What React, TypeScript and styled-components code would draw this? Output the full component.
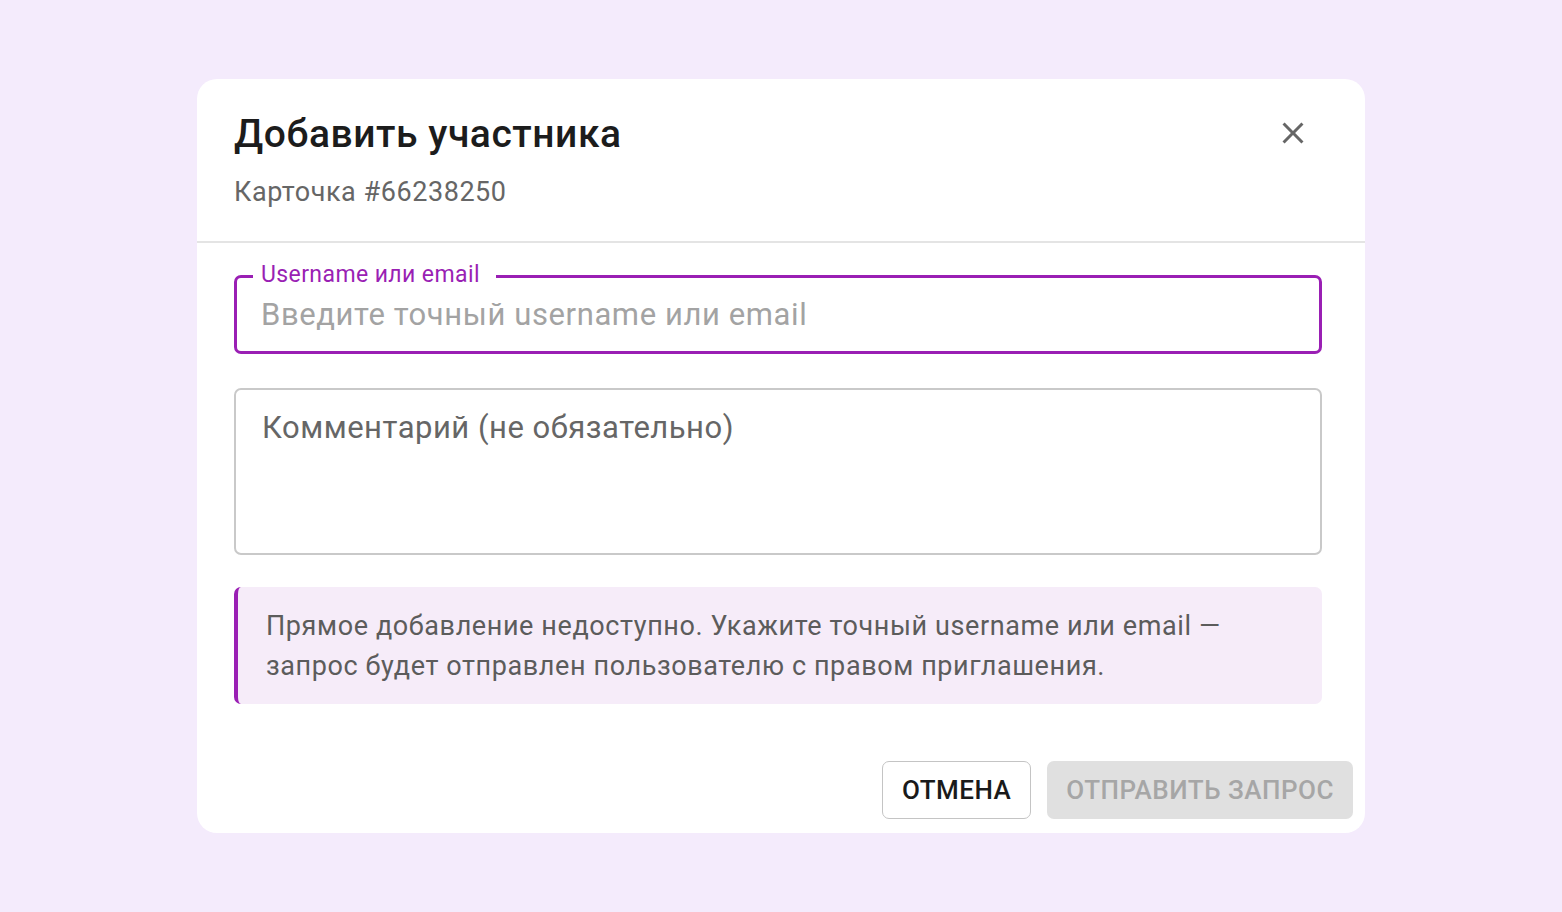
import styled, { createGlobalStyle } from 'styled-components';

const Global = createGlobalStyle`
    html, body {
        margin: 0;
        padding: 0;
        background: #f4ebfc;
        font-family: Roboto, "Noto Sans", "Liberation Sans", sans-serif;
    }
`

function CloseIcon() {
    return (
        <svg width="36" height="36" viewBox="0 0 24 24" fill="#666">
            <path d="M19 6.41 17.59 5 12 10.59 6.41 5 5 6.41 10.59 12 5 17.59 6.41 19 12 13.41 17.59 19 19 17.59 13.41 12z" />
        </svg>
    )
}

function App() {
    return (
        <Page>
            <Global />
            <Dialog>
                <Head>
                    <div>
                        <Title>Добавить участника</Title>
                        <Sub>Карточка #66238250</Sub>
                    </div>
                    <CloseBtn aria-label="close"><CloseIcon /></CloseBtn>
                </Head>
                <Body>
                    <Field $focused>
                        <Legend>Username или email</Legend>
                        <Input placeholder="Введите точный username или email" />
                    </Field>
                    <Field>
                        <Area placeholder="Комментарий (не обязательно)" />
                    </Field>
                    <Note>
                        Прямое добавление недоступно. Укажите точный username или email —
                        запрос будет отправлен пользователю с правом приглашения.
                    </Note>
                </Body>
                <Actions>
                    <Button $variant="outline">Отмена</Button>
                    <Button $variant="disabled" disabled>Отправить запрос</Button>
                </Actions>
            </Dialog>
        </Page>
    );
}

export default App;

const Page = styled.div`
    width: 1562px;
    height: 912px;
    display: flex;
    justify-content: center;
    padding-top: 79px;
    box-sizing: border-box;
`

const Dialog = styled.div`
    width: 1168px;
    height: 754px;
    background: #fff;
    border-radius: 20px;
    display: flex;
    flex-direction: column;
    box-sizing: border-box;
`

const Head = styled.div`
    display: flex;
    justify-content: space-between;
    align-items: flex-start;
    padding: 31px 54px 0 37px;
    height: 164px;
    box-sizing: border-box;
    border-bottom: 2px solid #e4e4e4;
`

const Title = styled.h2`
    margin: 0;
    font-size: 39px;
    line-height: 48px;
    font-weight: 500;
    letter-spacing: 0.55px;
    color: #1c1c1c;
`

const Sub = styled.div`
    margin-top: 18px;
    font-size: 27px;
    line-height: 32px;
    letter-spacing: 0.55px;
    color: #666;
`

const CloseBtn = styled.button`
    border: none;
    background: none;
    padding: 0;
    margin-top: 5px;
    width: 36px;
    height: 36px;
    cursor: pointer;
    display: flex;
`

const Body = styled.div`
    padding: 32px 43px 0 37px;
    display: flex;
    flex-direction: column;
    gap: 34px;
`

const Field = styled.div<{ $focused?: boolean }>`
    position: relative;
    border: ${p => p.$focused ? '3px solid #9a1fb4' : '2px solid #c9c9c9'};
    border-radius: 7px;
    display: flex;
`

const Legend = styled.span`
    position: absolute;
    top: -17px;
    left: 16px;
    padding: 0 16px 0 8px;
    background: #fff;
    font-size: 23px;
    line-height: 28px;
    letter-spacing: 0.4px;
    color: #9a1fb4;
`

const Input = styled.input`
    flex: 1;
    border: none;
    outline: none;
    background: transparent;
    font-family: inherit;
    font-size: 31px;
    letter-spacing: 0.6px;
    padding: 18px 24px 18px;
    color: #222;
    &::placeholder {
        color: #a3a3a3;
    }
`

const Area = styled.textarea`
    flex: 1;
    height: 163px;
    resize: none;
    border: none;
    outline: none;
    background: transparent;
    font-family: inherit;
    font-size: 31px;
    letter-spacing: 0.5px;
    line-height: 38px;
    padding: 19px 26px;
    box-sizing: border-box;
    &::placeholder {
        color: #666;
    }
`

const Note = styled.div`
    margin-top: -2px;
    background: #f6ecf9;
    border-left: 4px solid #9a1fb4;
    border-radius: 7px;
    padding: 19px 28px 18px 28px;
    font-size: 27px;
    line-height: 40px;
    letter-spacing: 0.6px;
    color: #5c5c5c;
`

const Actions = styled.div`
    margin-top: auto;
    display: flex;
    justify-content: flex-end;
    gap: 16px;
    padding: 0 12px 14px;
`

const Button = styled.button<{ $variant: 'outline' | 'disabled' }>`
    height: 58px;
    padding: 0 19px;
    border-radius: 7px;
    font-family: inherit;
    font-size: 26px;
    font-weight: 500;
    letter-spacing: 0.5px;
    text-transform: uppercase;
    border: ${p => p.$variant === 'outline' ? '1.5px solid #c4c4c4' : 'none'};
    background: ${p => p.$variant === 'outline' ? '#fff' : '#e0e0e0'};
    color: ${p => p.$variant === 'outline' ? '#1a1a1a' : '#a6a6a6'};
    cursor: ${p => p.$variant === 'outline' ? 'pointer' : 'default'};
`
